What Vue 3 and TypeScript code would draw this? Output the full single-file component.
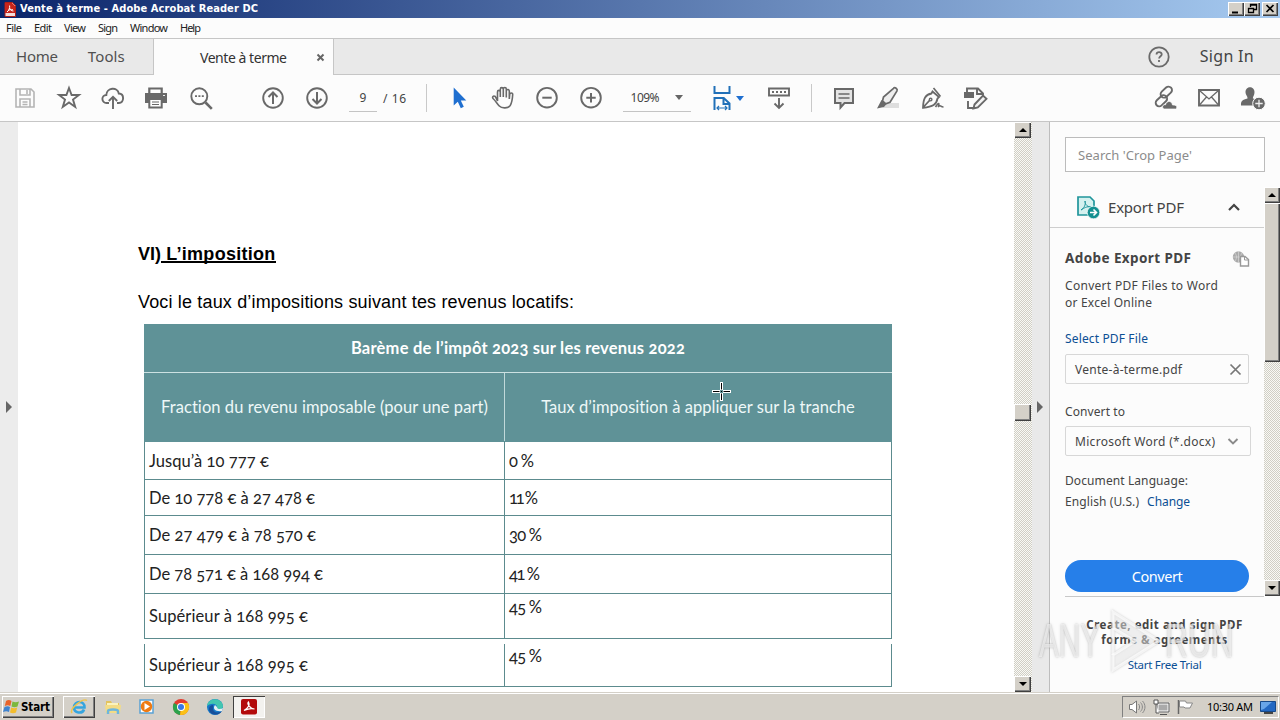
<script setup lang="ts">
import type { Directive } from 'vue'

interface Row { label: string; width: number; rate: string; rateWidth: number; height: number; top?: boolean; detached?: boolean }

// Tracks a single line of text so that it fills the given width.
const vFit: Directive<HTMLElement, number> = {
  mounted(el, binding) {
    const natural = el.getBoundingClientRect().width
    const gaps = Math.max(1, (el.textContent ?? '').trim().length - 1)
    el.style.letterSpacing = `${((binding.value - natural) / gaps).toFixed(3)}px`
  },
}

const menus = [
  { text: 'File', width: 16, box: 28 },
  { text: 'Edit', width: 18, box: 30 },
  { text: 'View', width: 22, box: 34 },
  { text: 'Sign', width: 20, box: 32 },
  { text: 'Window', width: 38, box: 50 },
  { text: 'Help', width: 21, box: 33 },
]

const rows: Row[] = [
  { label: 'Jusqu’à 10 777 €', width: 120, rate: '0 %', rateWidth: 25, height: 38 },
  { label: 'De 10 778 € à 27 478 €', width: 166, rate: '11 %', rateWidth: 29, height: 36 },
  { label: 'De 27 479 € à 78 570 €', width: 167, rate: '30 %', rateWidth: 33, height: 39 },
  { label: 'De 78 571 € à 168 994 €', width: 174, rate: '41 %', rateWidth: 31, height: 39 },
  { label: 'Supérieur à 168 995 €', width: 159, rate: '45 %', rateWidth: 33, height: 45, top: true },
  { label: 'Supérieur à 168 995 €', width: 159, rate: '45 %', rateWidth: 33, height: 43, top: true, detached: true },
]
</script>

<template>
  <div class="screen">
    <header class="titlebar">
      <svg class="app-icon" width="12" height="15" viewBox="0 0 12 15"><path d="M1 .5h7.500L11.500 3.500v11H1z" fill="#f6dcd9" stroke="#b11d15"/><path d="M1 1h7l3 3v7H1z" fill="#c8251c"/><path d="M3 10C5 8.500 6 6 5.600 3.500M5.500 6c1 2 2 3 4 3M4 8.500c1.500-.8 3-1 5-.7" fill="none" stroke="#fff"/></svg>
      <span v-fit="238" class="title">Vente à terme - Adobe Acrobat Reader DC</span>
      <div class="winbtns">
        <i class="btn3d"><svg width="14" height="11" viewBox="0 0 14 11"><path d="M3 9.500h6" stroke="#000" stroke-width="2"/></svg></i>
        <i class="btn3d"><svg width="14" height="11" viewBox="0 0 14 11"><path d="M5.500 4V1.500h6v5H9M5 2h7M3.500 5.500h5v4h-5zM3 5.500h6" fill="none" stroke="#000" stroke-width="1.300"/></svg></i>
        <i class="btn3d close"><svg width="14" height="11" viewBox="0 0 14 11"><path d="M3.500 2l7 7M10.500 2l-7 7" stroke="#000" stroke-width="1.700"/></svg></i>
      </div>
    </header>

    <nav class="menubar">
      <span v-for="m in menus" :key="m.text" class="menu" :style="{ width: m.box + 'px' }"><span v-fit="m.width" class="t">{{ m.text }}</span></span>
    </nav>

    <div class="tabbar">
      <div class="hometabs"><span v-fit="42" class="t">Home</span><span v-fit="37" class="t tools">Tools</span></div>
      <div class="tab"><span v-fit="87" class="t">Vente à terme</span><svg width="9" height="9" viewBox="0 0 9 9"><path d="M1.500 1.500l6 6M7.500 1.500l-6 6" stroke="#666" stroke-width="2"/></svg></div>
      <div class="tabrest">
        <svg width="24" height="24" viewBox="0 0 24 24"><circle cx="12" cy="12" r="9.700" fill="none" stroke="#6a6a6a" stroke-width="1.800"/><path d="M9.500 9.500c.2-3.200 5.300-3 5.200-.1 0 1.800-2.500 2-2.600 4.100M12 15v2" fill="none" stroke="#6a6a6a" stroke-width="1.800"/></svg>
        <span v-fit="54" class="t signin">Sign In</span>
      </div>
    </div>

    <div class="toolbar">
      <span class="tool"><svg viewBox="0 0 30 30"><path d="M6 6h15l3 3v15H6zM10 6v6h10V6M10 24v-8h10v8M17 7v4M12.500 19h5M12.500 21.500h5"/></svg></span>
      <span class="tool"><svg viewBox="0 0 30 30"><path d="M15 5l2.600 7h7.300l-5.900 4.500 2.200 7.400L15 19.400l-6.200 4.500L11 16.500 5.100 12h7.300z"/></svg></span>
      <span class="tool"><svg viewBox="0 0 30 30"><path d="M11 20H8.500a4 4 0 0 1-.2-8c.2-7.500 11.300-8.500 12.500-1.500 5.800.3 5.600 9.500.1 9.500H19M15 26V14M10.800 18L15 13.800l4.200 4.200"/></svg></span>
      <span class="tool print"><svg viewBox="0 0 30 30"><path d="M8.300 11V5.500h12.400V11" stroke-width="2.200"/><path d="M4 10h22v10H4z" fill="#696969" stroke="none"/><path d="M8.300 16h12.400v8.500H8.300z" fill="#fff" stroke-width="2"/><path d="M11 19h7M11 21.500h7" stroke-width="1.200"/><path d="M22 12.500h2" stroke="#eee" stroke-width="1"/></svg></span>
      <span class="tool"><svg viewBox="0 0 30 30"><circle cx="13.300" cy="13.300" r="8" /><path d="M19.500 19.500l6.300 6.300" stroke-width="2.600"/><path d="M9 13.200h2M12.400 13.200h2M15.800 13.200h2" stroke-width="1.800"/></svg></span>
      <span class="tool up"><svg viewBox="0 0 30 30"><circle cx="15" cy="15" r="9.800"/><path d="M15 21v-11M10.500 14L15 9.500l4.500 4.500" stroke-width="2"/></svg></span>
      <span class="tool"><svg viewBox="0 0 30 30"><circle cx="15" cy="15" r="9.800"/><path d="M15 9v11M10.500 16l4.500 4.500 4.500-4.500" stroke-width="2"/></svg></span>
      <div class="pagebox"><span>9</span></div>
      <span v-fit="23" class="t pages">/ 16</span>
      <i class="sep"></i>
      <span class="tool cursor"><svg viewBox="0 0 30 30"><path d="M9.700 4.500v18l4.100-3.700 3 6.400 3-1.400-3-6.200h5.500z" fill="#1f6fd0" stroke="none"/></svg></span>
      <span class="tool"><svg viewBox="0 0 30 30"><path d="M9.500 18V9c0-2.200 2.700-2.200 2.800 0v5V6.300c0-2.200 3-2.200 3 0V14 6c0-2 3-2 3 0v8.500V8c0-2.100 3-2.100 3 0v8l.4-4.500c.2-2.100 3.100-2 3 0-.3 5.500-.5 8-2.600 11.200-1.600 2.700-8.400 3-10.800.3-2.200-2.400-4-5.500-5.800-7-2-2 0-3.800 1.800-2.500z" stroke-width="1.600"/></svg></span>
      <span class="tool"><svg viewBox="0 0 30 30"><circle cx="15" cy="14.700" r="9.800"/><path d="M10.300 14.700h9.400" stroke-width="2"/></svg></span>
      <span class="tool"><svg viewBox="0 0 30 30"><circle cx="15" cy="14.700" r="9.800"/><path d="M10.300 14.700h9.400M15 10v9.400" stroke-width="2"/></svg></span>
      <div class="zoombox"><span v-fit="29" class="t">109%</span><i class="caret"></i></div>
      <span class="fit"><svg width="20" height="30" viewBox="0 0 20 30"><path d="M2.500 3v7h15V3M2.500 27V15h9.200l5.800 5.500V27M11.500 15v6h6" fill="none" stroke="#2170b8" stroke-width="2"/><path d="M5 25h10M7 23l-2 2 2 2M13 23l2 2-2 2" fill="none" stroke="#2170b8" stroke-width="1.200"/></svg></span>
      <i class="caret blue"></i>
      <span class="tool kbd"><svg viewBox="0 0 30 30"><path d="M5 5.500h20v7H5z"/><path d="M8 9h2M12 9h2M16 9h2M20 9h2M15 15v10M10.500 20.500l4.500 4.500 4.500-4.500"/></svg></span>
      <i class="sep second"></i>
      <span class="tool comment"><svg viewBox="0 0 30 30"><path d="M6 6h18v14h-8.500l-4 4.500V20H6z" fill="#e4e4e4" stroke-width="2"/><path d="M9.500 11h11M9.500 15h11" stroke-width="1.400"/></svg></span>
      <span class="tool"><svg viewBox="0 0 30 30"><path d="M15 20h11v5H9z" fill="#dedede" stroke="none"/><path d="M20.500 5.300c1.300-1.500 4.500.6 3.500 2.600L17 19.300l-4.200 1.500-3.300-2.800 1-4z" fill="#eee" stroke-width="1.700"/><path d="M8.500 17l5 4-2.500 3-7 1.500z" fill="#696969" stroke="none"/></svg></span>
      <span class="tool"><svg viewBox="0 0 30 30"><path d="M15.500 8.500l6.500 5.500-1.500 1.500c-1 6-4.500 8-14.500 9.300C6.200 15.300 8.500 11.500 14.500 10.500zM6 24.500l6.500-7" stroke-width="1.800"/><path d="M16.500 5l7 8.500" stroke-width="1.700"/><circle cx="13.600" cy="16.600" r="1.300" stroke-width="1.400"/><path d="M18.500 24c4.500-7 3.500-1 2.500 0 3-3 2 0 5.500 0" stroke-width="1.700"/></svg></span>
      <span class="tool"><svg viewBox="0 0 30 30"><path d="M3 9h10v6H3z" fill="#696969" stroke="none"/><path d="M6 9V5.500h11l5 5V12M16 5.500V11h6M7 18v7h6"/><path d="M13.500 21.500L22 12.500l3.500 3.300-8.700 8.700-4.300 1z" fill="#f4f4f4"/></svg></span>
      <span class="spacer"></span>
      <span class="tool"><svg viewBox="0 0 30 30"><g transform="rotate(-43 14 14)"><rect x="12.500" y="8.500" width="13" height="7" rx="3.500"/><rect x="3" y="11.500" width="13" height="7" rx="3.500"/></g><path d="M14 26c-3-2-.5-5 1.500-4.200 1.500-5 6.500-3.800 7 .2 5-.5 5 3 3.200 4z" fill="#696969" stroke="#fcfcfc" stroke-width=".7"/></svg></span>
      <span class="tool"><svg viewBox="0 0 30 30"><path d="M5 7h20v15.500H5z"/><path d="M5.500 7.500L15 16l9.500-8.500M5.500 22l7-8M24.500 22l-7-8" stroke-width="1.300"/></svg></span>
      <span class="tool last"><svg viewBox="0 0 30 30"><path d="M7.500 9c0-6.500 9-6.500 9 0 0 3-1.300 4-1.700 6.300l4.200 2.200V22.500H3c-.2-5 1.500-5.500 6.500-7C9.800 13 7.500 12 7.500 9z" fill="#696969" stroke="none"/><circle cx="21" cy="20.500" r="6.300" fill="#696969" stroke="#fcfcfc" stroke-width="1"/><path d="M17.300 20.500h7.400M21 16.800v7.400" stroke="#eee" stroke-width="1.300"/></svg></span>
    </div>

    <main class="body">
      <aside class="leftgut"><i class="tri"></i></aside>
      <article class="page">
        <h1><span v-fit="23" class="t">VI)</span><span v-fit="114" class="t u">&nbsp;L’imposition</span></h1>
        <p><span v-fit="436" class="t">Voci le taux d’impositions suivant tes revenus locatifs:</span></p>
        <section class="table">
          <div class="thead"><span v-fit="334" class="t">Barème de l’impôt 2023 sur les revenus 2022</span></div>
          <div class="row sub"><div><span v-fit="327" class="t">Fraction du revenu imposable (pour une part)</span></div><div><span v-fit="314" class="t">Taux d’imposition à appliquer sur la tranche</span></div></div>
          <div v-for="(r, i) in rows" :key="i" class="row data" :class="{ detached: r.detached }" :style="{ height: r.height + 'px' }">
            <div><span v-fit="r.width" class="t">{{ r.label }}</span></div>
            <div :class="{ top: r.top }"><span v-fit="r.rateWidth" class="t">{{ r.rate }}</span></div>
          </div>
        </section>
        <svg class="cross" width="19" height="19" viewBox="0 0 19 19"><path d="M9.500 0v8M9.500 11v8M0 9.500h8M11 9.500h8" stroke="#fff" stroke-width="3"/><path d="M9.500 1v6.500M9.500 11.500V18M1 9.500h6.500M11.500 9.500H18M9 9.500h1" stroke="#000"/></svg>
      </article>
      <div class="scroll docscroll"><i class="btn3d sb"><b class="ar up"></b></i><i class="btn3d thumb"></i><i class="btn3d sb"><b class="ar"></b></i></div>
      <aside class="rightgut"><i class="tri"></i></aside>
      <aside class="panel">
        <div class="search"><span v-fit="114" class="t">Search 'Crop Page'</span></div>
        <div class="mid">
          <div class="midmain">
            <div class="exphead">
              <svg width="24" height="24" viewBox="0 0 24 24"><path d="M2 2h12l4 4v14H2z" fill="#d4f1ef" stroke="#20959b" stroke-width="1.700"/><path d="M5 15c3-2 5-5 4-9 0 4 3 6 6 6-4-1-7 1-10 3z" fill="none" stroke="#20959b"/><circle cx="17.500" cy="17.500" r="6.300" fill="#138f90" stroke="#fcfcfc" stroke-width=".7"/><path d="M14 17.500h6M17.500 14.500l3 3-3 3" fill="none" stroke="#fff" stroke-width="1.600"/></svg>
              <span v-fit="76" class="t">Export PDF</span>
              <svg class="chev" width="14" height="10" viewBox="0 0 14 10"><path d="M2 8l5-5 5 5" fill="none" stroke="#444" stroke-width="2.200"/></svg>
            </div>
            <div class="expbody">
              <div class="line adobe"><span v-fit="126" class="t">Adobe Export PDF</span><svg width="18" height="18" viewBox="0 0 18 18"><circle cx="6.500" cy="7" r="5.700" fill="#aaa"/><path d="M1 7h11M6.500 1v12M3 3c2 3 2 5 0 8M10 3c-2 3-2 5 0 8" fill="none" stroke="#ddd" stroke-width=".6"/><path d="M8.500 6.500h4.500l3.500 3V16h-8z" fill="#fff" stroke="#999" stroke-width="1.400"/><path d="M12.500 6.500v3.500h4" fill="none" stroke="#999"/></svg></div>
              <div class="line l1"><span v-fit="153" class="t">Convert PDF Files to Word</span></div>
              <div class="line"><span v-fit="87" class="t">or Excel Online</span></div>
              <div class="line l2 link"><span v-fit="83" class="t">Select PDF File</span></div>
              <div class="field"><span v-fit="107" class="t">Vente-à-terme.pdf</span><svg width="13" height="13" viewBox="0 0 13 13"><path d="M1.500 1.500l10 10M11.500 1.500l-10 10" stroke="#777" stroke-width="1.700"/></svg></div>
              <div class="line l3"><span v-fit="60" class="t">Convert to</span></div>
              <div class="field drop"><span v-fit="140" class="t">Microsoft Word (*.docx)</span><svg width="12" height="9" viewBox="0 0 12 9"><path d="M1.500 2L6 6.500 10.500 2" fill="none" stroke="#8a8a8a" stroke-width="1.900"/></svg></div>
              <div class="line l4"><span v-fit="123" class="t">Document Language:</span></div>
              <div class="line l5"><span v-fit="74" class="t">English (U.S.)</span><span v-fit="43" class="t link change">Change</span></div>
              <button><span v-fit="51" class="t">Convert</span></button>
            </div>
          </div>
          <div class="scroll pscroll"><i class="btn3d sb"><b class="ar up"></b></i><i class="btn3d thumb"></i><i class="btn3d sb end"><b class="ar"></b></i></div>
        </div>
        <footer>
          <span v-fit="156" class="t">Create, edit and sign PDF</span>
          <span v-fit="126" class="t">forms &amp; agreements</span>
          <span v-fit="74" class="t link trial">Start Free Trial</span>
        </footer>
      </aside>
    </main>

    <footer class="taskbar">
      <div class="btn3d start"><svg width="18" height="18" viewBox="0 0 18 18"><path d="M3 3c2-1.500 4-1 5.500 0L7.300 8C5.500 7 4 7 1.800 8z" fill="#e8632a"/><path d="M9.500 3.500c2 1 4 1 6.500 0L14.500 8.500c-2 1-4 1-6 0z" fill="#7cb83c"/><path d="M1.500 9C4 8 5.500 8.200 7 9L6 14c-2-1-3.500-1-6 0z" fill="#3f83cf"/><path d="M8.200 9.500c2 1 4 1 6 0L13 14.500c-2.200 1-4 .8-6 0z" fill="#f3bd2d"/></svg><span v-fit="29" class="t">Start</span></div>
      <div class="btn3d app ie"><svg width="18" height="18" viewBox="0 0 18 18"><path d="M4.500 9.500h10C15 2 4 2.500 4 9.500c0 6 8.500 6.500 10 2" fill="none" stroke="#35a5df" stroke-width="2.600"/><path d="M2 15C-1 11 13-.5 17 2.500" fill="none" stroke="#efc44a" stroke-width="1.500"/></svg></div>
      <div class="app"><svg width="18" height="18" viewBox="0 0 18 18"><path d="M2 3h5l1 2h7v9H2z" fill="#e3c35d"/><path d="M3 5h11v5H3z" fill="#faf3be"/><path d="M1 7h16l-1 8H2z" fill="#f3dc86"/><path d="M4 16v-3c0-2 10-2 10 0v3" fill="none" stroke="#6eb6dd" stroke-width="2.500"/></svg></div>
      <div class="app"><svg width="18" height="18" viewBox="0 0 18 18"><rect x="2" y="2" width="13" height="13" fill="#fff" stroke="#5aa1d4" stroke-width="1.500"/><circle cx="8.500" cy="8.500" r="5.700" fill="#ee7b13"/><path d="M6.500 5l5.500 3.500L6.500 12z" fill="#fff"/></svg></div>
      <div class="app"><svg width="18" height="18" viewBox="0 0 18 18"><circle cx="9" cy="9" r="8" fill="#e33b2e"/><path d="M9 9L2 5a8 8 0 0 0 6 12z" fill="#2ba24c"/><path d="M9 9l-1 8A8 8 0 0 0 16 5H9z" fill="#fbc116"/><circle cx="9" cy="9" r="4" fill="#fff"/><circle cx="9" cy="9" r="3" fill="#3978e6"/></svg></div>
      <div class="app"><svg width="18" height="18" viewBox="0 0 18 18"><circle cx="9" cy="9" r="8" fill="#1578c8"/><path d="M1 8C2-1 16-1 17 8c0 4-5 4-6 2 1-4-5-6-10-2z" fill="#43c6b0"/><path d="M7 9c-1 5 4 7 9 4-4 6-13 4-13-2 0-3 2-4 4-4z" fill="#174f9a"/><path d="M9 7c-3 4 1 7 7 6l1-3c-3 2-6 1-6-1z" fill="#e4f0f3"/></svg></div>
      <div class="app pdf"><svg width="18" height="18" viewBox="0 0 18 18"><rect x="1" y="1" width="16" height="15.500" rx="2" fill="#b30b0b"/><path d="M4 12.500c5-3 6-6 4.500-8.500-2 2 2 7 6 7-4-1-7 0-10.500 1.500z" fill="none" stroke="#fff" stroke-width="1.200"/></svg></div>
      <span class="spacer"></span>
      <div class="tray">
        <svg width="18" height="18" viewBox="0 0 18 18"><path d="M1.500 6.500H4L8.500 3v12L4 11.500H1.500z" fill="#fff" stroke="#777"/><path d="M10.500 6c1.500 1.500 1.500 4.500 0 6M12.500 4.500c2.500 2.500 2.500 6.500 0 9M14.500 3c3.300 3.500 3.300 8.500 0 12" fill="none" stroke="#888"/></svg>
        <svg width="18" height="18" viewBox="0 0 18 18"><path d="M5.500 5.500h11v8h-11z" fill="#aaa" stroke="#fff" stroke-width="2"/><path d="M5 5h12v9H5zM8 16.500h7" fill="none" stroke="#555"/><path d="M2 2v4h4V2zM4 6v9h3" fill="#fff" stroke="#555"/></svg>
        <svg width="18" height="18" viewBox="0 0 18 18"><path d="M2.500 2v14" stroke="#666" stroke-width="1.500"/><path d="M3.500 3h6l1 2h6L14 10h-5L8 9H3.500z" fill="#fff" stroke="#888"/></svg>
        <span v-fit="46" class="t">10:30 AM</span>
        <svg class="desk" width="16" height="15" viewBox="0 0 16 15"><path d="M.5 1.500h15v10H.5z" fill="#2368c2" stroke="#174988"/><path d="M1 2h11L4 9 1 10z" fill="#68a5e8"/><path d="M4 13h9" stroke="#444" stroke-width="2"/></svg>
      </div>
    </footer>

    <div class="watermark"><span class="any">ANY</span><svg width="58" height="66" viewBox="0 0 58 66"><path d="M8 4l46 29L8 62V47l22-14L8 20z"/><path d="M8 20v27"/></svg><span class="run">RUN</span></div>
  </div>
</template>

<style>
html, body { margin: 0; overflow: hidden; background: #fff; }
</style>

<style scoped>
* { box-sizing: border-box; }
.screen { position: relative; width: 1280px; height: 720px; display: flex; flex-direction: column; overflow: hidden; font-family: "Noto Sans", "Open Sans", sans-serif; color: #444; background: #fcfcfc; }
.t { display: inline-block; white-space: pre; flex: none; }
svg { display: block; flex: none; }
i { display: block; font-style: normal; }
.btn3d { background: #d4d0c8; box-shadow: inset 1px 1px #fff, inset -1px -1px #404040, inset -2px -2px #808080; flex: none; }
.titlebar { height: 18px; flex: none; display: flex; align-items: center; padding: 0 2px 0 4px; background: linear-gradient(90deg, #0a246a, #a6caf0); }
.title { display: inline-block; white-space: nowrap; margin-left: 4px; color: #fff; font: bold 11px/18px "DejaVu Sans Condensed", "DejaVu Sans", sans-serif; }
.winbtns { margin-left: auto; display: flex; height: 14px; }
.winbtns .btn3d { width: 16px; height: 14px; padding: 1px; }
.winbtns .close { margin-left: 2px; }
.menubar { height: 20px; flex: none; display: flex; padding-left: 6px; font: 11px/19px "Noto Sans", sans-serif; color: #222; }
.tabbar { height: 37px; flex: none; display: flex; border-top: 1px solid #c6c6c6; color: #505050; font-size: 15px; line-height: 35px; }
.hometabs { width: 154px; padding-left: 16px; background: #e9e9e9; border: solid #c6c6c6; border-width: 0 1px 1px 0; }
.tools { margin-left: 30px; }
.tab { width: 179px; display: flex; align-items: center; padding-left: 46px; color: #333; font-size: 14px; }
.tab svg { margin-left: 29px; }
.tabrest { flex: 1; display: flex; align-items: center; justify-content: flex-end; padding-right: 26px; background: #e9e9e9; border: solid #c6c6c6; border-width: 0 0 1px 1px; }
.signin { margin-left: 29px; font-size: 16px; color: #444; }
.toolbar { height: 47px; flex: none; display: flex; align-items: center; padding: 0 5px 0 3px; border-bottom: 1px solid #c6c6c6; font-size: 12px; }
.tool { width: 44px; height: 30px; display: flex; justify-content: center; flex: none; }
.tool svg { width: 30px; height: 30px; fill: none; stroke: #696969; stroke-width: 1.900; }
.tool:first-child svg { stroke: #b4b4b4; stroke-width: 1.600; }
.print { padding-right: 2px; }
.up.tool { margin-left: 28px; }
.pagebox { margin-left: 10px; width: 28px; height: 28px; border-bottom: 1px solid #c4c4c4; text-align: center; line-height: 28px; }
.pages { margin-left: 6px; }
.sep { margin-left: 19px; width: 1px; height: 28px; background: #c9c9c9; }
.cursor { margin-left: 10px; }
.zoombox { margin-left: 10px; width: 68px; height: 28px; padding: 0 8px; border-bottom: 1px solid #c4c4c4; display: flex; align-items: center; justify-content: space-between; }
.caret { border: 4px solid transparent; border-top: 5px solid #666; border-bottom: 0; }
.caret.blue { margin-left: 4px; border-top-color: #1f6fd0; }
.fit { margin-left: 21px; }
.kbd { margin-left: 13px; }
.second { margin-left: 10px; }
.comment { margin-left: 10px; }
.spacer { flex: 1; }
.body { height: 570px; flex: none; display: flex; }
.leftgut { width: 18px; background: #ececec; display: flex; align-items: center; padding-left: 6px; }
.tri { border: 6px solid transparent; border-left-color: #666; border-right: 0; }
.page { position: relative; width: 996px; background: #fff; padding: 0 122px 0 120px; color: #000; font-family: "Liberation Sans", Arial, sans-serif; }
h1 { margin: 0; padding-top: 121px; font-size: 18px; line-height: 22px; height: 143px; display: flex; }
.u { border-bottom: 2px solid #000; height: 20px; }
p { margin: 26px 0 0; height: 22px; line-height: 22px; font-size: 18px; }
.table { margin: 11px 0 0 6px; width: 748px; font: 16.500px/20px Lato, "Open Sans", sans-serif; font-variant-numeric: oldstyle-nums; color: #222; }
.thead { height: 49px; background: #5f9297; border-bottom: 1px solid #cce1e2; color: #fff; font-weight: bold; display: flex; align-items: center; justify-content: center; }
.row { display: grid; grid-template-columns: 360px 388px; }
.row > div { display: flex; align-items: center; }
.sub { height: 69px; background: #5f9297; color: #eef8f8; padding-bottom: 1px; }
.sub > div { justify-content: center; }
.sub > div:first-child { padding-left: 1px; }
.sub > div + div { border-left: 1px solid #c1d9da; padding-right: 1px; }
.data { border: solid #5c8b8e; border-width: 0 1px 1px; }
.data > div { padding-left: 4px; }
.data > div + div { margin-left: -1px; padding-left: 4px; border-left: 1px solid #5c8b8e; }
.data > .top { align-items: flex-start; padding-top: 3px; }
.detached { margin-top: 5px; }
.detached > .top { padding-top: 2px; }
.cross { position: absolute; left: 694px; top: 260px; }
.scroll { width: 18px; display: flex; flex-direction: column; background: repeating-conic-gradient(#d0cec5 0 25%, #f9f9f5 0 50%) 0 0 / 2px 2px; flex: none; }
.docscroll .thumb { margin: 266px 0 0; height: 17px; width: 17px; }
.docscroll .sb:last-child { margin-top: auto; }
.sb { width: 17px; height: 16px; display: flex; align-items: center; justify-content: center; }
.ar { border: 4px solid transparent; border-top-color: #000; border-bottom: 0; }
.ar.up { border: 4px solid transparent; border-bottom-color: #000; border-top: 0; }
.rightgut { width: 18px; background: #e9e9e9; border-right: 1px solid #bdbdbd; display: flex; align-items: center; padding-left: 5px; }
.panel { width: 230px; display: flex; flex-direction: column; background: #fcfcfc; font-size: 12px; }
.search { margin: 15px 15px 0; height: 35px; border: 1px solid #bcbcbc; padding-left: 12px; line-height: 34px; background: #fff; color: #8c8c8c; font-size: 13px; }
.mid { height: 409px; margin-top: 15px; display: flex; }
.midmain { width: 214px; }
.exphead { height: 41px; border-bottom: 1px solid #cecece; display: flex; align-items: center; padding: 0 23px 0 26px; font-size: 15px; }
.exphead .t { margin-left: 8px; }
.chev { margin-left: auto; }
.expbody { padding: 22px 0 0 15px; height: 368px; }
.line { height: 17px; line-height: 17px; display: flex; }
.adobe { font-weight: bold; font-size: 13.500px; align-items: center; }
.adobe svg { margin-left: 41px; }
.l1 { margin-top: 10px; }
.link { color: #0b4f94; }
.l2 { margin-top: 19px; }
.field { margin-top: 7px; width: 184px; height: 30px; border: 1px solid #d7d7d7; border-radius: 2px; display: flex; align-items: center; justify-content: space-between; padding: 0 6px 0 9px; }
.drop { margin-top: 6px; width: 186px; padding-right: 11px; }
.l3 { margin-top: 19px; }
.l4 { margin-top: 16px; }
.l5 { margin-top: 4px; }
.change { margin-left: 8px; }
button { display: block; margin: 50px 0 0; width: 184px; height: 32px; padding: 0; border: 0; border-radius: 16px; background: #267fe9; color: #fff; font: 14.500px/31px "Noto Sans", sans-serif; }
.pscroll { width: 16px; }
.pscroll .sb { width: 16px; }
.pscroll .thumb { height: 159px; }
.pscroll .end { margin-top: auto; }
.panel footer { margin-left: 15px; width: 199px; height: 96px; border-top: 1px solid #c8c8c8; display: flex; flex-direction: column; align-items: center; padding-top: 20px; font-weight: bold; font-size: 11.500px; line-height: 15px; }
.panel footer .trial { margin-top: 10px; font-weight: normal; }
.taskbar { height: 28px; flex: none; background: #d4d0c8; box-shadow: inset 0 1px #d4d0c8, inset 0 2px #fff; display: flex; align-items: center; padding: 2px 1px 0 2px; }
.start { width: 52px; height: 22px; display: flex; align-items: center; padding-left: 1px; color: #000; font: bold 11.500px/20px "DejaVu Sans Condensed", sans-serif; margin-right: 9px; }
.app { width: 32px; height: 22px; display: flex; align-items: center; justify-content: center; margin-right: 2px; }
.pdf { background: #f3f2ef; box-shadow: inset 1px 1px #404040, inset -1px -1px #fff; }
.tray { width: 157px; height: 22px; border: 1px solid #808080; border-right-color: #fff; border-bottom-color: #fff; display: flex; align-items: center; padding-left: 5px; color: #000; font: 11px/20px "Noto Sans", sans-serif; }
.tray svg { margin-right: 6px; }
.tray .t { margin-left: 7px; }
.tray .desk { margin-left: 7px; margin-right: 0; }
.watermark { position: absolute; left: 1039px; top: 608px; height: 66px; display: flex; align-items: center; color: rgba(255, 255, 255, .6); font: 48px/50px "Liberation Sans", Arial, sans-serif; text-shadow: 0 0 3px rgba(110, 110, 110, .5); }
.watermark span { display: block; transform-origin: left center; }
.any { width: 66px; transform: scaleX(.62); }
.run { width: 70px; margin-left: 2px; transform: scaleX(.66); }
.watermark svg { fill: rgba(255, 255, 255, .4); stroke: rgba(255, 255, 255, .7); stroke-width: 3; filter: drop-shadow(0 0 1px rgba(120, 120, 120, .5)); }
</style>
